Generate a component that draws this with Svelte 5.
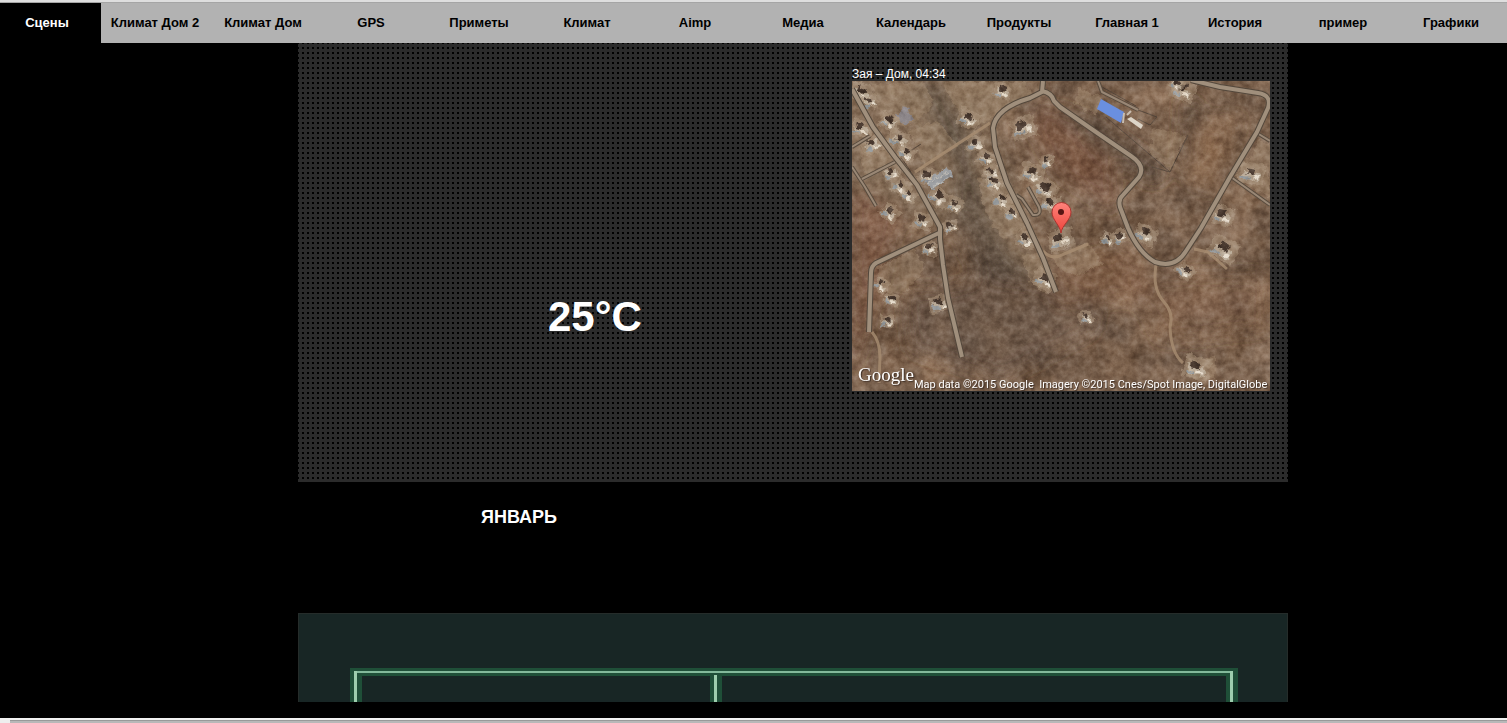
<script lang="ts">
	type House = [x: number, y: number, size: number, angle: number];

	const scenes = [
		'Сцены',
		'Климат Дом 2',
		'Климат Дом',
		'GPS',
		'Приметы',
		'Климат',
		'Aimp',
		'Медиа',
		'Календарь',
		'Продукты',
		'Главная 1',
		'История',
		'пример',
		'Графики'
	];

	let active = $state(0);

	const roads = [
		'M0 8 L21 46 L43 76 L65 104 L88 146 L88 158 L91 184 L96 217 L110 276',
		'M87 152 L24 182 Q19 185 19 192 L17 251',
		'M191 0 L190 11 L178 17 Q144 27 141 47 L143 66 L155 102 L175 142 L191 177 L204 211',
		'M190 10 Q200 12 202 20 L208 26 L241 49 L279 75 Q294 85 287 96 L271 114 Q266 118 268 126 L276 147 Q287 172 303 181 Q323 188 334 170 L349 147 L378 96 L405 51 L416 27 Q420 14 406 12 L368 6 L339 -1'
	];

	const lanes = [
		'M0 66 L18 55',
		'M43 81 L10 98',
		'M0 86 L13 106 L24 125',
		'M164 114 L170 118 L181 134 Q190 135 187 126 L176 106',
		'M246 0 L250 11 L286 29',
		'M405 52 L418 60',
		'M379 96 L418 124'
	];

	const trails = [
		'M63 91 L101 66 L138 42',
		'M20 251 Q28 260 28 277 L27 302',
		'M304 184 Q300 208 312 221 Q322 232 318 246 Q319 272 331 282',
		'M191 170 Q200 180 212 173 L236 163',
		'M342 168 L356 171 L375 188'
	];

	const fences = [
		'M286 29 L305 36 L298 44 L286 38',
		'M336 54 L318 91 L300 86',
		'M254 36 L318 91',
		'M250 6 L284 25',
		'M66 102 L49 76 L69 63'
	];

	const fields = [
		'M20 3 L72 0 L82 25 L53 48 L28 34Z',
		'M92 0 L172 0 L180 15 L140 36 L118 49 L91 4Z',
		'M57 48 L87 40 L105 65 L72 85Z',
		'M9 65 L42 52 L55 70 L38 82 L12 96Z',
		'M25 186 L62 169 L73 188 L51 213 L30 210Z',
		'M125 96 L154 101 L175 150 L150 157 L133 130Z',
		'M170 175 L189 170 L202 206 L191 211 L179 202Z',
		'M199 173 L238 161 L250 183 L225 195 L207 187Z',
		'M300 46 L334 55 L319 89 L298 73Z',
		'M226 5 L250 18 L244 34 L221 21Z',
		'M383 88 L395 77 L418 81 L418 116 L386 98Z',
		'M407 58 L418 64 L418 82 L397 78Z',
		'M334 279 L364 275 L363 297 L334 298Z'
	];

	const houses: House[] = [
		[10, 11, 12, 20],
		[18, 20, 9, -15],
		[38, 40, 11, 24],
		[9, 47, 11, 15],
		[20, 63, 12, -25],
		[48, 58, 11, 18],
		[55, 72, 10, 28],
		[39, 91, 10, -15],
		[49, 105, 11, 35],
		[57, 114, 9, 30],
		[76, 95, 12, 12],
		[87, 116, 12, 35],
		[38, 131, 10, 35],
		[71, 139, 11, 15],
		[103, 124, 9, 24],
		[98, 145, 8, -20],
		[117, 37, 12, 25],
		[151, 10, 10, 20],
		[124, 62, 10, 5],
		[135, 77, 10, 22],
		[140, 91, 9, -12],
		[142, 101, 10, 20],
		[150, 119, 11, 24],
		[161, 132, 9, 15],
		[171, 46, 14, -16],
		[181, 92, 13, 18],
		[193, 108, 13, 26],
		[195, 80, 8, -12],
		[199, 122, 11, 12],
		[208, 158, 14, -15],
		[174, 158, 11, 20],
		[193, 198, 12, 20],
		[78, 167, 9, 15],
		[87, 222, 11, -10],
		[29, 203, 9, 35],
		[40, 218, 8, 15],
		[35, 240, 8, 0],
		[331, 9, 13, 16],
		[325, 3, 9, 40],
		[371, 134, 13, 15],
		[372, 168, 16, 28],
		[334, 190, 10, 40],
		[294, 153, 12, 24],
		[268, 155, 9, -15],
		[256, 158, 8, 15],
		[400, 92, 14, 10],
		[345, 286, 15, 15],
		[234, 236, 8, -15]
	];
</script>

<svelte:head>
	<title>Сцены</title>
</svelte:head>

<div class="page">
	<nav class="scenes" aria-label="Сцены">
		{#each scenes as scene, i}
			<button
				type="button"
				class="scene-tab"
				class:active={active === i}
				aria-current={active === i ? 'page' : undefined}
				onclick={() => (active = i)}
			>
				{scene}
			</button>
		{/each}
	</nav>

	<main>
		<section class="board">
			<div class="temperature">25°C</div>

			<figure class="tracker">
				<figcaption>Зая – Дом, 04:34</figcaption>
				<div class="map">
					<svg viewBox="0 0 418 310" role="img" aria-label="Карта">
						<defs>
							<filter id="ground" x="0" y="0" width="100%" height="100%" color-interpolation-filters="sRGB">
								<feTurbulence type="fractalNoise" baseFrequency="0.03" numOctaves="5" seed="17" />
								<feColorMatrix
									values="0.30 0.08 0 0 0.30
										0.26 0.10 0 0 0.21
										0.22 0.12 0 0 0.14
										0 0 0 0 1"
								/>
							</filter>
							<filter id="grain" x="0" y="0" width="100%" height="100%" color-interpolation-filters="sRGB">
								<feTurbulence type="fractalNoise" baseFrequency="0.14" numOctaves="4" seed="5" />
								<feColorMatrix
									values="0.9 0 0 0 0.05
										0.9 0 0 0 0.05
										0.9 0 0 0 0.05
										0 0 0 0 1"
								/>
							</filter>
							<filter id="worn" x="-5%" y="-5%" width="110%" height="110%" color-interpolation-filters="sRGB">
								<feTurbulence type="fractalNoise" baseFrequency="0.14" numOctaves="3" seed="8" />
								<feDisplacementMap
									in="SourceGraphic"
									scale="8"
									xChannelSelector="R"
									yChannelSelector="G"
								/>
								<feGaussianBlur stdDeviation="0.6" />
							</filter>
							<filter id="haze" x="-30%" y="-30%" width="160%" height="160%">
								<feGaussianBlur stdDeviation="8" />
							</filter>
							<linearGradient id="pin" x1="0" y1="0" x2="0" y2="1">
								<stop offset="0" stop-color="#ff837b" />
								<stop offset="1" stop-color="#ed443b" />
							</linearGradient>
						</defs>

						<rect width="418" height="310" fill="#795d49" />
						<rect width="418" height="310" filter="url(#ground)" />

						<g filter="url(#haze)">
							<path d="M0 0 L190 0 L141 45 L205 208 L150 190 L110 130 L88 150 L0 100Z" fill="#8f7962" opacity="0.5" />
							<path d="M58 0 L90 0 L116 56 L139 143 L178 200 L128 199 L99 143 L105 91 L82 40Z" fill="#4f4438" opacity="0.55" />
							<path d="M51 210 L102 206 L176 183 L248 211 L243 249 L151 298 L59 270Z" fill="#5c4c3f" opacity="0.45" />
							<path d="M199 24 L248 42 L318 92 L300 104 L204 35Z" fill="#4b4034" opacity="0.55" />
							<path d="M330 13 L350 27 L342 76 L325 89Z" fill="#504138" opacity="0.45" />
							<path d="M0 110 L50 130 L17 240 L0 296Z" fill="#7c4f39" opacity="0.45" />
							<path d="M190 22 L260 82 L263 130 L205 92 L178 44Z" fill="#7c503c" opacity="0.45" />
							<path d="M340 42 L388 37 L358 110 L337 97Z" fill="#98704f" opacity="0.45" />
							<path d="M194 189 L277 168 L299 215 L205 222Z" fill="#8a5f47" opacity="0.4" />
							<path d="M272 193 L416 194 L414 248 L310 260Z" fill="#86604a" opacity="0.35" />
						</g>

						<g class="fields" filter="url(#worn)">
							{#each fields as d}
								<path {d} />
							{/each}
						</g>

						<g class="fences">
							{#each fences as d}
								<path {d} />
							{/each}
						</g>

						<g filter="url(#worn)">
							{#each houses as [x, y, size, angle]}
								<g transform="translate({x} {y}) rotate({angle})">
									<rect x={-size * 0.9} y={-size * 0.7} width={size * 1.8} height={size * 1.5} fill="#a8937b" opacity="0.6" />
									<rect x={-size * 0.6} y="-1" width={size * 1.2} height={size * 0.6} fill="#c4b8a5" opacity="0.8" />
									<rect x={-size * 0.4} y={-size * 0.4} width={size * 0.6} height={size * 0.5} fill="#4a3a30" />
									<rect x={size * 0.1} y={size * 0.2} width={size * 0.4} height="3" fill="#e6dccd" />
									<rect x={-size * 0.7} y={size * 0.3} width={size * 0.6} height="3" fill="#969a9c" />
								</g>
							{/each}
							<path d="M73 102 L96 86 L101 94 L80 108Z" fill="#9b9da0" />
							<path d="M75 104 L96 90 M79 107 L99 94" stroke="#bfbcb5" />
							<path d="M43 32 L56 26 L62 39 L51 44Z" fill="#8b8588" />
						</g>

						<rect class="grain" width="418" height="310" filter="url(#grain)" />

						<g class="trails">
							{#each trails as d}
								<path {d} />
							{/each}
						</g>
						<g class="lanes edge">
							{#each lanes as d}
								<path {d} />
							{/each}
						</g>
						<g class="lanes">
							{#each lanes as d}
								<path {d} />
							{/each}
						</g>
						<g class="roads edge">
							{#each roads as d}
								<path {d} />
							{/each}
						</g>
						<g class="roads">
							{#each roads as d}
								<path {d} />
							{/each}
						</g>

						<path d="M249 18 L272 31 L269 42 L245 28Z" fill="#6a8fdf" />
						<path d="M275 38 L279 36 L291 44 L289 48Z" fill="#ddd5c8" />
						<path d="M272 32 L271 42 M279 30 L275 34" stroke="#c8bdb0" stroke-width="2" />

						<path
							d="M209 152 C208 144 200 139 200 131 A9.5 9.5 0 0 1 219 131 C219 139 210 144 209 152Z"
							fill="url(#pin)"
							stroke="#ab342f"
						/>
						<circle cx="209" cy="131" r="3" fill="#561513" />
					</svg>
					<div class="map-legend">
						<span class="map-logo">Google</span>
						<span class="map-credit">Map data ©2015 Google&nbsp; Imagery ©2015 Cnes/Spot Image, DigitalGlobe</span>
					</div>
				</div>
			</figure>
		</section>

		<h2>ЯНВАРЬ</h2>

		<section class="plan" aria-label="План дома">
			<svg viewBox="0 0 988 88" aria-hidden="true">
				<path d="M51 54 H939 V88 H927 V62 H423 V88 H411 V62 H63 V88 H51Z" fill="#1f4f38" />
				<path d="M55 58 H934" stroke="#83b99b" stroke-width="2" />
				<path d="M56.5 57 V88 M416.5 61 V88 M932.5 57 V88" stroke="#9dceae" stroke-width="3" />
			</svg>
		</section>
	</main>

	<div class="bottom-bar"></div>
</div>

<style>
	:global(body) {
		margin: 0;
		background: #000;
		color: #fff;
		font-family: 'Liberation Sans', Arial, sans-serif;
	}

	.page {
		display: flex;
		flex-direction: column;
		box-sizing: border-box;
		min-height: 100vh;
		border-top: 2px solid #dedede;
	}

	.scenes {
		display: grid;
		grid-template-columns: 101px repeat(13, minmax(0, 1fr));
		padding-right: 2px;
		border-top: 1px solid #a5a5a5;
		background: #b2b2b2;
	}

	.scene-tab {
		height: 40px;
		padding: 0;
		border: 0;
		background: transparent;
		color: #000;
		cursor: pointer;
		font: bold 13px/40px 'Liberation Sans', Arial, sans-serif;
		text-align: center;
		white-space: nowrap;
	}

	.scene-tab:first-child {
		padding-right: 7px;
	}

	.scene-tab.active {
		background: #000;
		color: #fff;
	}

	main {
		flex: 1;
		width: 990px;
		margin: 0 auto;
		padding-left: 79px;
	}

	.board {
		display: grid;
		grid-template-columns: 1fr 418px;
		align-items: start;
		box-sizing: border-box;
		min-height: 439px;
		padding: 24px 18px 24px 250px;
		background-color: #2b2b2b;
		background-image: linear-gradient(#2b2b2b 3px, transparent 3px),
			linear-gradient(90deg, #2b2b2b 3px, #000 3px);
		background-position: 1px 1px;
		background-size: 5px 5px;
	}

	.temperature {
		padding-top: 226px;
		font-size: 42px;
		font-weight: bold;
		line-height: 48px;
	}

	.tracker {
		margin: 0;
	}

	.tracker figcaption {
		font-size: 12px;
		line-height: 14px;
	}

	.map {
		position: relative;
	}

	.map svg,
	.plan svg {
		display: block;
		width: 100%;
	}

	.map path {
		stroke-linejoin: round;
	}

	.fields {
		fill: #a58c72;
		opacity: 0.45;
	}

	.fences {
		fill: none;
		stroke: #5a4b3f;
		stroke-width: 1;
	}

	.grain {
		mix-blend-mode: soft-light;
		opacity: 0.6;
	}

	.trails {
		fill: none;
		stroke: #a88e72;
		stroke-width: 3;
		opacity: 0.8;
	}

	.lanes {
		fill: none;
		stroke: #998775;
		stroke-width: 2;
	}

	.lanes.edge {
		stroke: #594c3f;
		stroke-width: 4;
	}

	.roads {
		fill: none;
		stroke: #a08f7c;
		stroke-width: 4;
	}

	.roads.edge {
		stroke: #54483c;
		stroke-width: 6;
	}

	.map-legend {
		position: absolute;
		inset: auto 0 0;
		display: flex;
		align-items: flex-end;
		justify-content: space-between;
		padding: 0 3px 0 6px;
		text-shadow: 1px 1px 1px #3f3027;
		white-space: nowrap;
	}

	.map-logo {
		padding-bottom: 4px;
		font: 19px/24px 'Liberation Serif', serif;
	}

	.map-credit {
		font: 11px/12px Roboto, sans-serif;
	}

	h2 {
		margin: 0;
		padding: 24px 0 85px 183px;
		font-size: 18px;
		line-height: 22px;
	}

	.plan {
		border: 1px solid #252c2a;
		border-bottom: 0;
		background: #182625;
	}

	.bottom-bar {
		height: 3px;
		border-top: 2px solid #f2f2f2;
		background: linear-gradient(#999 1px, #b8b8b8 1px) no-repeat 10px 0 #eee;
	}
</style>
